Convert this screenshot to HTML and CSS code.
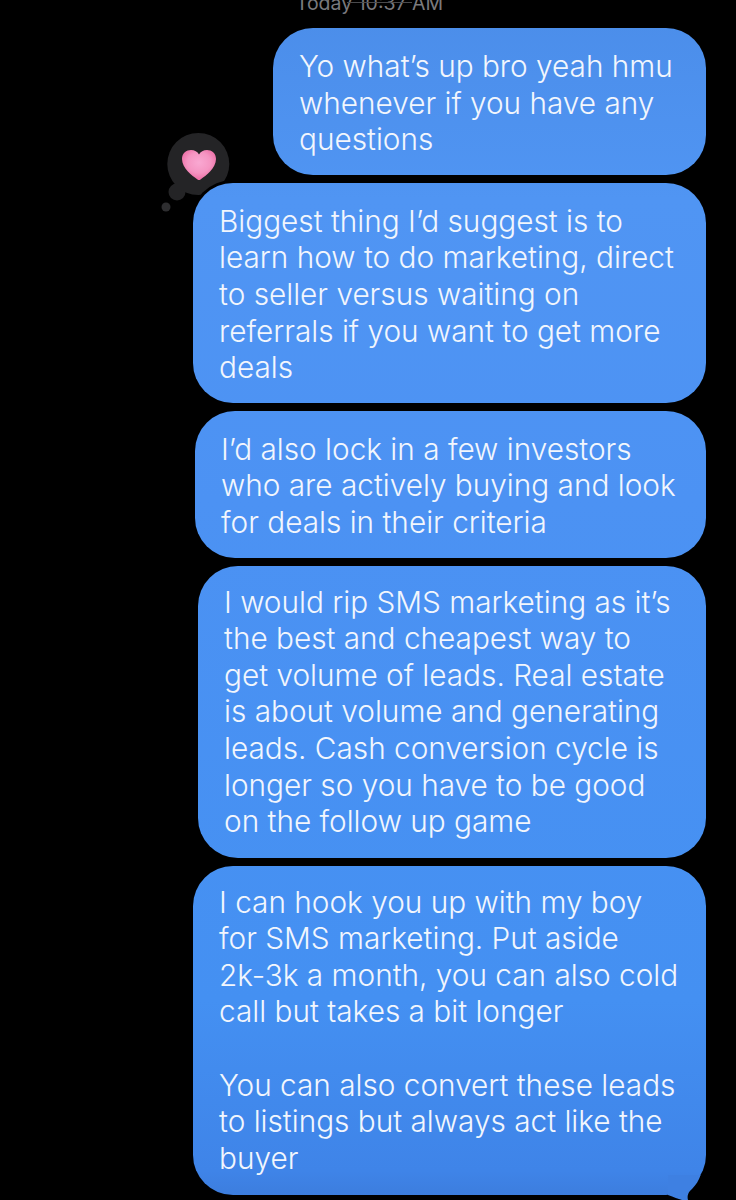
FILE: index.html
```html
<!DOCTYPE html>
<html lang="en">
<head>
<meta charset="utf-8">
<title>Messages</title>
<link rel="stylesheet" href="styles.css">
</head>
<body>
<main class="thread">
  <div class="stamp"><span class="stamp-text">Today 10:37 AM</span></div>
  <div class="bubble high b1">Yo what’s up bro yeah hmu<br>whenever if you have any<br>questions</div>
  <div class="bubble high b2">
    <div class="tapback">
      <svg class="tapback-svg" viewBox="0 0 78 90" width="78" height="90" aria-hidden="true">
        <defs>
          <radialGradient id="heart" cx="0.5" cy="0.42" r="0.62">
            <stop offset="0" stop-color="#f9a8d2"/>
            <stop offset="0.55" stop-color="#f595c2"/>
            <stop offset="1" stop-color="#ec659f"/>
          </radialGradient>
        </defs>
        <circle cx="12" cy="76" r="4.500" fill="#2e2e30"/>
        <circle cx="23" cy="61" r="8.500" fill="#242426"/>
        <circle cx="44.300" cy="33" r="31" fill="#242426"/>
        <path d="M43.500 48.500 C38 44.500 28 37 28 28 C28 22 32.500 19 37 19 C40.500 19 43.500 20.500 45 23.500 C46.500 20.500 49.500 19 53 19 C57.500 19 62 22 62 28 C62 37 52 44.500 46.500 48.500 C45.500 49.200 44.500 49.200 43.500 48.500 Z" fill="url(#heart)"/>
      </svg>
    </div>
    Biggest thing I’d suggest is to<br>learn how to do marketing, direct<br>to seller versus waiting on<br>referrals if you want to get more<br>deals
  </div>
  <div class="bubble high b3">I’d also lock in a few investors<br>who are actively buying and look<br>for deals in their criteria</div>
  <div class="bubble b4">I would rip SMS marketing as it’s<br>the best and cheapest way to<br>get volume of leads. Real estate<br>is about volume and generating<br>leads. Cash conversion cycle is<br>longer so you have to be good<br>on the follow up game</div>
  <div class="bubble b5">I can hook you up with my boy<br>for SMS marketing. Put aside<br>2k-3k a month, you can also cold<br>call but takes a bit longer<br><br>You can also convert these leads<br>to listings but always act like the<br>buyer
    <svg class="tail" viewBox="0 0 46 25" width="46" height="25" aria-hidden="true"><path d="M8 20 C14 22 18 24 22 25 H28 C27 21 28 17 32 14 C36 10 39 5 40.600 0 H8 Z" fill="#3e80e2"/></svg>
  </div>
</main>
</body>
</html>
```
FILE: styles.css
```css
* { box-sizing: border-box; }
html { background: #000; }
html, body { margin: 0; height: 1200px; overflow: hidden; }
.thread {
  isolation: isolate;
  display: flex;
  flex-direction: column;
  align-items: flex-end;
  gap: 8px;
  padding-right: 30px;
  font-family: Inter, "Noto Sans", sans-serif;
  font-size: 29.75px;
  font-weight: 350;
  line-height: 36.6px;
  color: #f2f6fd;
}
.stamp {
  align-self: stretch;
  height: 20px;
  display: flex;
  justify-content: center;
  align-items: flex-end;
  padding-left: 33px;
  overflow: hidden;
}
.stamp-text {
  position: relative;
  font-size: 19.5px;
  font-weight: 400;
  line-height: 24px;
  margin-bottom: 5px;
  color: #7a7a7e;
  white-space: nowrap;
}
.stamp-text::after {
  content: "";
  position: absolute;
  left: 51px;
  width: 65px;
  top: 11px;
  height: 1px;
  background: #4a4a4c;
}
.bubble {
  position: relative;
  white-space: nowrap;
  padding: 18px 26px 19px;
  border-radius: 40px;
  background: linear-gradient(#4b8de9 0, #5095f3 200px, #4c92f3 500px, #4490f2 1000px, #3f84e8 1170px, #3c7cdc 1200px) fixed;
}
.high { padding-top: 20px; padding-bottom: 17px; }
.b1 { width: 433px; }
.b2 { width: 513px; box-shadow: 0 0 0 3px #000; }
.b3 { width: 511px; }
.b4 { width: 508px; height: 292px; }
.b5 { width: 513px; }
.tapback {
  position: absolute;
  z-index: -1;
  left: -39px;
  top: -52px;
  line-height: 0;
}
.tail {
  position: absolute;
  right: 0;
  top: calc(100% - 20px);
}
```
